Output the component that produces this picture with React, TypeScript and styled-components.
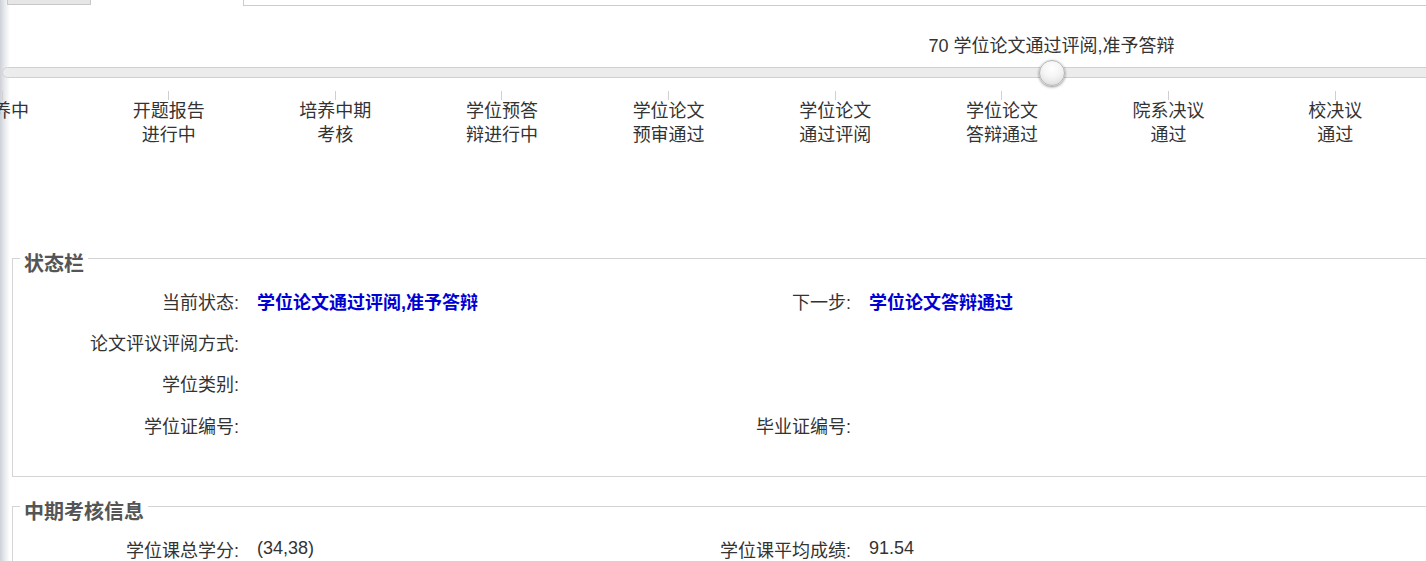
import * as React from 'react'
import styled, { createGlobalStyle } from 'styled-components'

const GlobalStyle = createGlobalStyle`
  html, body {
    margin: 0;
    padding: 0;
    overflow: hidden;
    background: #fff;
  }
`

const Page = styled.div`
  min-height: 561px;
  overflow: hidden;
  background: linear-gradient(to right, #cdd1d7 0, #e9ebee 5px, #fff 10px);
  font-family: 'Liberation Sans', 'Noto Sans CJK SC', sans-serif;
  font-size: 18px;
  color: #333;
`

const TabBar = styled.div`
  display: flex;
  align-items: flex-end;
  height: 6px;
  overflow: hidden;
`

const Tab = styled.div<{ active?: boolean }>`
  flex: 0 0 auto;
  height: 30px;
  box-sizing: border-box;
  ${({ active }) =>
    active
      ? `width: 153px; background: #fff; border-right: 1px solid #ccc;`
      : `width: 84px; margin-left: 7px; margin-bottom: 1px; background: #e6e6e6; border: 1px solid #c8c8c8;`}
`

const TabFill = styled.div`
  flex: 1;
  height: 1px;
  background: #ccc;
`

const SliderArea = styled.div`
  width: 1500px;
  margin-left: 2px;
  padding-top: 61px;
`

const Track = styled.div`
  position: relative;
  height: 11px;
  box-sizing: border-box;
  border: 1px solid #d0d0d0;
  border-radius: 6px;
  background: #ececec;
`

const Marker = styled.div`
  position: absolute;
  top: 50%;
  width: 0;
  height: 0;
`

const Handle = styled.div`
  position: absolute;
  left: -13px;
  top: -13px;
  width: 26px;
  height: 26px;
  box-sizing: border-box;
  border-radius: 50%;
  border: 1px solid #b4b4b4;
  background: radial-gradient(circle at 50% 30%, #ffffff 0, #f4f4f4 45%, #d6d6d6 100%);
  box-shadow: 0 1px 3px rgba(0, 0, 0, 0.45);
`

const Bubble = styled.div`
  position: absolute;
  left: 0;
  bottom: 15px;
  transform: translateX(-50%);
  white-space: nowrap;
  line-height: 24px;
  color: #333;
`

const Ticks = styled.div`
  display: flex;
  margin: 13px 0 0 -83.33px;
`

const TickItem = styled.div`
  flex: 0 0 166.67px;
  display: flex;
  flex-direction: column;
  align-items: center;
`

const TickMark = styled.span`
  width: 1px;
  height: 9px;
  background: #d0d0d0;
`

const TickLabel = styled.div`
  margin-top: -1px;
  text-align: center;
  line-height: 24px;
  white-space: nowrap;
  color: #333;
`

const Group = styled.fieldset<{ gap: number }>`
  width: 1600px;
  margin: ${({ gap }) => gap}px 0 0 12px;
  padding: 6px 0 31px;
  border: 1px solid #d4d4d4;
`

const Legend = styled.legend`
  margin-left: 7px;
  padding: 11px 4px 0;
  font-size: 20px;
  line-height: 20px;
  font-weight: bold;
  color: #555;
`

const InfoGrid = styled.div`
  display: grid;
  grid-template-columns: 226px 350px 226px 1fr;
  grid-auto-rows: 41.3px;
  column-gap: 18px;
  align-items: center;
`

const Label = styled.div`
  text-align: right;
  white-space: nowrap;
  color: #333;
`

const Value = styled.div<{ strong?: boolean }>`
  white-space: nowrap;
  color: ${({ strong }) => (strong ? '#0000d4' : '#333')};
  font-weight: ${({ strong }) => (strong ? 'bold' : 'normal')};
`

const steps: string[][] = [
  ['培养中'],
  ['开题报告', '进行中'],
  ['培养中期', '考核'],
  ['学位预答', '辩进行中'],
  ['学位论文', '预审通过'],
  ['学位论文', '通过评阅'],
  ['学位论文', '答辩通过'],
  ['院系决议', '通过'],
  ['校决议', '通过'],
]

type Field = { label: string; value?: string; strong?: boolean }

const statusRows: Field[][] = [
  [
    { label: '当前状态:', value: '学位论文通过评阅,准予答辩', strong: true },
    { label: '下一步:', value: '学位论文答辩通过', strong: true },
  ],
  [{ label: '论文评议评阅方式:' }, { label: '' }],
  [{ label: '学位类别:' }, { label: '' }],
  [{ label: '学位证编号:' }, { label: '毕业证编号:' }],
]

const midRows: Field[][] = [
  [
    { label: '学位课总学分:', value: '(34,38)' },
    { label: '学位课平均成绩:', value: '91.54' },
  ],
]

const progress = { value: 70, text: '学位论文通过评阅,准予答辩' }

const Rows: React.FC<{ rows: Field[][] }> = ({ rows }) => (
  <InfoGrid>
    {rows.map((row, i) =>
      row.map((f, j) => (
        <React.Fragment key={`${i}-${j}`}>
          <Label>{f.label}</Label>
          <Value strong={f.strong}>{f.value ?? ''}</Value>
        </React.Fragment>
      ))
    )}
  </InfoGrid>
)

export default function App() {
  return (
    <Page>
      <GlobalStyle />
      <TabBar>
        <Tab />
        <Tab active />
        <TabFill />
      </TabBar>

      <SliderArea>
        <Track>
          <Marker style={{ left: `${progress.value}%` }}>
            <Bubble>
              {progress.value} {progress.text}
            </Bubble>
            <Handle />
          </Marker>
        </Track>
        <Ticks>
          {steps.map((lines, i) => (
            <TickItem key={i}>
              <TickMark />
              <TickLabel>
                {lines.map((l, k) => (
                  <div key={k}>{l}</div>
                ))}
              </TickLabel>
            </TickItem>
          ))}
        </Ticks>
      </SliderArea>

      <Group gap={96}>
        <Legend>状态栏</Legend>
        <Rows rows={statusRows} />
      </Group>

      <Group gap={14}>
        <Legend>中期考核信息</Legend>
        <Rows rows={midRows} />
      </Group>
    </Page>
  )
}
